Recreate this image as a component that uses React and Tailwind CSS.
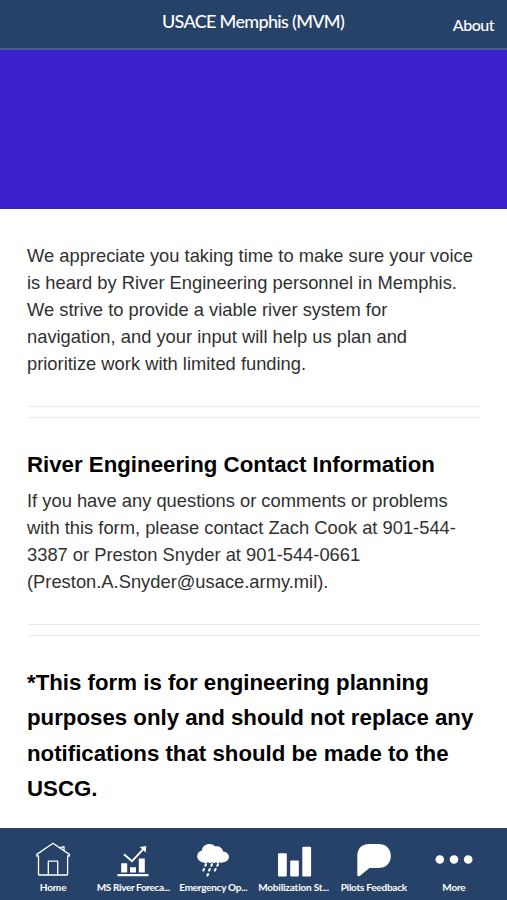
const tabs = [
	{ id: "home", label: "Home", icon: HomeIcon, tracking: "tracking-[-0.05px]" },
	{ id: "forecast", label: "MS River Foreca...", icon: ForecastIcon, tracking: "tracking-[-0.36px]" },
	{ id: "emergency", label: "Emergency Op...", icon: RainIcon, tracking: "tracking-[-0.28px]" },
	{ id: "mobilization", label: "Mobilization St...", icon: BarsIcon, tracking: "tracking-[-0.18px]" },
	{ id: "feedback", label: "Pilots Feedback", icon: ChatIcon, tracking: "tracking-[-0.25px]" },
	{ id: "more", label: "More", icon: MoreIcon, tracking: "tracking-[-0.2px]" },
];

function HomeIcon() {
	return (
		<svg width="40" height="40" viewBox="0 0 40 40" fill="none" stroke="#fff" strokeWidth="1.3" strokeLinejoin="round" strokeLinecap="round">
			<path d="M5.5 16H3.8V14.4L20 3.2 36.4 14.4V16H34.6V34.2q0 .8-.8.8H6.3q-.8 0-.8-.8z" />
			<path d="M15.3 34.8V21.2H24.7V34.8M27 7.6 31 6.7V10.3" />
		</svg>
	);
}

function ForecastIcon() {
	return (
		<svg width="40" height="40" viewBox="0 0 40 40" fill="#fff">
			<path d="M4.5 34.1h31v2.2h-31zM8.2 23.2h6v9.4h-6zM17 27.2h6v5.4h-6zM25.8 18.4h6v14.2h-6z" />
			<path d="M26.8 7l6.5-1-.7 6.6z" />
			<path d="M11 14.2l8 7L31.3 8.2" fill="none" stroke="#fff" strokeWidth="1.8" />
		</svg>
	);
}

function RainIcon() {
	return (
		<svg width="40" height="40" viewBox="0 0 40 40" fill="#fff">
			<path d="M10.5 22.5C6.7 22 4.2 19.5 4.2 16.3c0-2.9 2-5.1 4.7-5.8C9.4 6.6 12.4 4 16.3 4c2.4 0 4.2.8 5.8 2.4 4.1-.7 7.2 1.5 8 5 3.3.2 5.8 2.4 5.8 5.4 0 3.2-2.5 5.3-5.8 5.4-1 .8-2.4.8-3.4.1-1.2 1.1-2.7 1.1-3.8 0-1.2 1.1-2.8 1.1-4 0-1.3 1-2.7 1-3.9 0-1.3.8-2.8 1-4.5.2z" />
			<path d="M13 24.2l-.7 1.5M19 24.2l-.7 1.5M25 24.2l-.7 1.5M11 29l-.7 1.5M16.8 29l-.7 1.5M22.6 29l-.7 1.5M15.1 34.1l-.7 1.4" stroke="#fff" strokeWidth="2.1" strokeLinecap="round" />
		</svg>
	);
}

function BarsIcon() {
	return (
		<svg width="40" height="40" viewBox="0 0 40 40" fill="#fff">
			<rect x="4" y="13.3" width="8.8" height="23.2" rx="1" />
			<rect x="16.2" y="20.5" width="8.6" height="16" rx="1" />
			<rect x="28.3" y="6.8" width="8.8" height="29.7" rx="1" />
		</svg>
	);
}

function ChatIcon() {
	return (
		<svg width="40" height="40" viewBox="0 0 40 40" fill="#fff">
			<path d="M3.3 16C3.3 8.3 8 4 15.5 4H24c8 0 12.8 4.5 12.8 12S32 28 24 28h-8.5L6.1 35.7c-1.5 1.1-2.8.6-2.8-1z" />
		</svg>
	);
}

function MoreIcon() {
	return (
		<svg width="40" height="40" viewBox="0 0 40 40" fill="#fff">
			<circle cx="5.8" cy="19.5" r="4.3" />
			<circle cx="20" cy="19.5" r="4.3" />
			<circle cx="34.2" cy="19.5" r="4.3" />
		</svg>
	);
}

function Divider() {
	return <div className="ml-px h-3 w-[452px] border-y border-[#e9e9e9]"></div>;
}

function App() {
	return (
		<div className="flex h-[900px] w-[507px] flex-col overflow-hidden bg-white font-['Liberation_Sans',sans-serif]">
			<header className="grid h-[50px] shrink-0 grid-cols-[162px_183px_1fr] border-b-2 border-[#465b91] bg-[#274268] font-['Lato',sans-serif] text-white">
				<h1 className="col-start-2 pt-[9px] text-[18px] leading-6 font-medium whitespace-nowrap tracking-[-0.68px]">USACE Memphis (MVM)</h1>
				<button className="mr-[13px] self-start justify-self-end pt-[13px] text-base leading-6 font-medium tracking-[-0.5px]">About</button>
			</header>
			<div className="h-[158.5px] shrink-0 bg-[#3b20cc]"></div>

			<main className="flex min-h-0 flex-1 flex-col pl-[27px] text-[#303030]">
				<p className="mt-[33.5px] text-[18.33px] leading-[27px] whitespace-nowrap">
					We appreciate you taking time to make sure your voice<br />
					is heard by River Engineering personnel in Memphis.<br />
					We strive to provide a viable river system for<br />
					navigation, and your input will help us plan and<br />
					prioritize work with limited funding.
				</p>
				<div className="mt-[29px]">
					<Divider />
				</div>
				<h2 className="mt-[31px] text-[22.25px] leading-[32px] font-bold whitespace-nowrap text-black">River Engineering Contact Information</h2>
				<p className="mt-[5.5px] text-[18.33px] leading-[27px] whitespace-nowrap">
					If you have any questions or comments or problems<br />
					with this form, please contact Zach Cook at 901-544-<br />
					3387 or Preston Snyder at 901-544-0661<br />
					(Preston.A.Snyder@usace.army.mil).
				</p>
				<div className="mt-[29.5px]">
					<Divider />
				</div>
				<h2 className="mt-[28.5px] text-[22.25px] leading-[35.5px] font-bold whitespace-nowrap text-black">
					*This form is for engineering planning<br />
					purposes only and should not replace any<br />
					notifications that should be made to the<br />
					USCG.
				</h2>
			</main>

			<nav className="grid h-[72px] shrink-0 grid-cols-6 bg-[#274268] px-[13px] font-['Lato',sans-serif] text-white">
				{tabs.map(({ id, label, icon: Icon, tracking }) => {
					return (
						<button key={id} className="flex flex-col items-center pt-3">
							<Icon />
							<span className={"text-[10px] leading-[14px] font-bold whitespace-nowrap " + tracking}>{label}</span>
						</button>
					);
				})}
			</nav>
		</div>
	);
}

export default App;
